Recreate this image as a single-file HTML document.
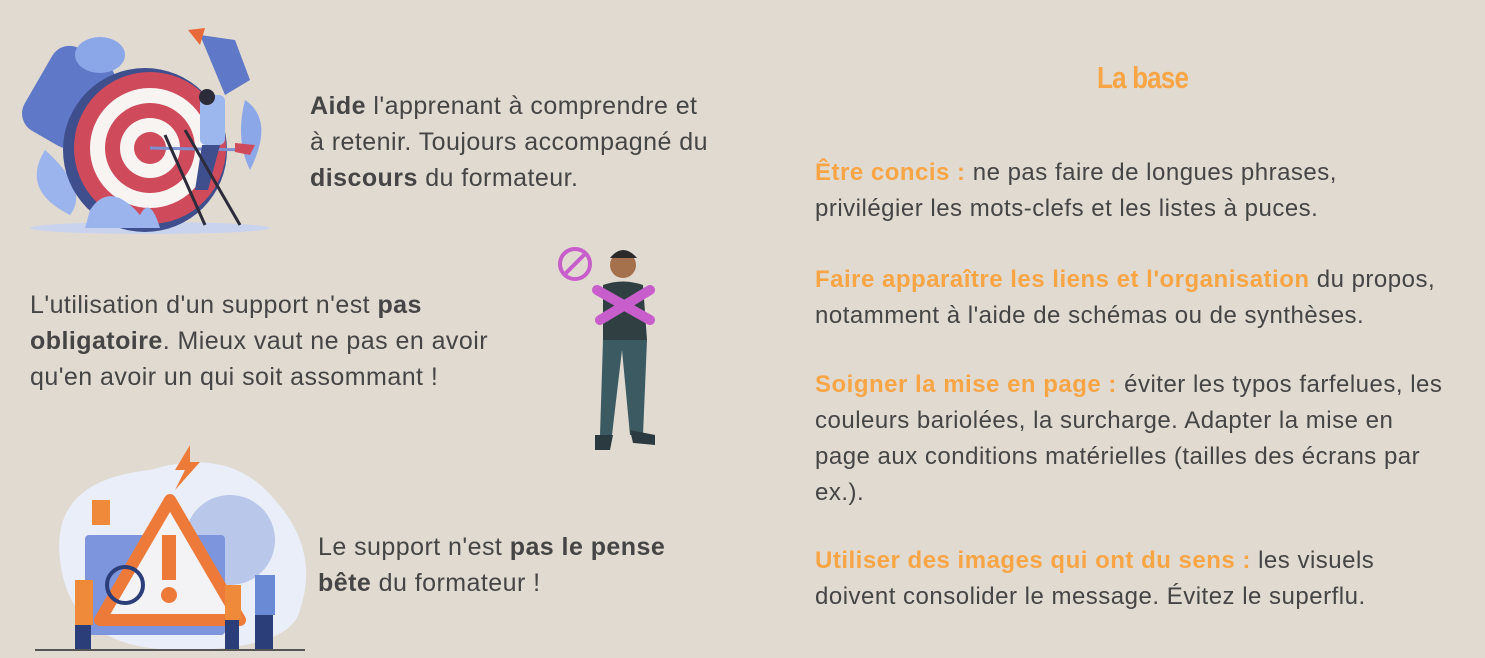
<!DOCTYPE html>
<html><head><meta charset="utf-8"><style>
body{margin:0;width:1485px;height:658px;background:#e1dad0;overflow:hidden;position:relative;font-family:"Liberation Sans",sans-serif;color:#454545}
.t{position:absolute;font-size:24px;letter-spacing:0.5px;line-height:36px;white-space:nowrap}
.l{font-size:25px;letter-spacing:0.45px}
b{font-weight:bold}
.o{color:#f7a545;font-weight:bold}
svg{position:absolute}
</style></head><body>

<svg style="left:20px;top:20px" width="260" height="220" viewBox="20 20 260 220">
<ellipse cx="150" cy="228" rx="120" ry="6" fill="#c9d3ee"/>
<rect x="35" y="50" width="70" height="95" rx="20" fill="#5f78c7" transform="rotate(30 70 95)"/>
<ellipse cx="100" cy="55" rx="25" ry="18" fill="#8ca7e8"/>
<path d="M45 150 Q20 190 70 215 Q90 190 45 150Z" fill="#9cb4ee"/>
<circle cx="145" cy="150" r="82" fill="#3f4f8e"/>
<circle cx="150" cy="148" r="76" fill="#cf4b5b"/>
<circle cx="150" cy="148" r="60" fill="#f7f4f2"/>
<circle cx="150" cy="148" r="45" fill="#cf4b5b"/>
<circle cx="150" cy="148" r="30" fill="#f7f4f2"/>
<circle cx="150" cy="148" r="16" fill="#cf4b5b"/>
<path d="M245 100 Q275 120 250 170 Q235 140 245 100Z" fill="#8ca7e8"/>
<path d="M200 35 L235 40 L250 80 L225 95 Z" fill="#5f78c7"/>
<path d="M188 30 L205 28 L200 45Z" fill="#e86a3a"/>
<line x1="150" y1="148" x2="250" y2="150" stroke="#7d8fd0" stroke-width="3"/>
<path d="M235 143 L255 145 L250 155 L235 152Z" fill="#cf4b5b"/>
<rect x="200" y="95" width="25" height="50" rx="6" fill="#9bb7ee"/>
<circle cx="207" cy="97" r="8" fill="#2b2b3a"/>
<path d="M202 145 L195 190 L208 190 L220 145Z" fill="#3f4f8e"/>
<path d="M165 135 L205 225 M185 130 L240 225" stroke="#2b2b3a" stroke-width="3"/>
<path d="M90 210 Q110 180 140 215 Q150 195 160 228 L85 228Z" fill="#9cb4ee"/>
</svg>

<div class="t l" style="left:310px;top:88px"><b>Aide</b> l'apprenant à comprendre et<br>à retenir. Toujours accompagné du<br><b>discours</b> du formateur.</div>

<div class="t l" style="left:30px;top:287px">L'utilisation d'un support n'est <b>pas</b><br><b>obligatoire</b>. Mieux vaut ne pas en avoir<br>qu'en avoir un qui soit assommant !</div>

<svg style="left:555px;top:240px" width="110" height="215" viewBox="0 0 110 215">
<circle cx="20" cy="24" r="15" fill="none" stroke="#c85ecb" stroke-width="4"/>
<line x1="10" y1="34" x2="30" y2="14" stroke="#c85ecb" stroke-width="4"/>
<circle cx="68" cy="25" r="13" fill="#a5704c"/>
<path d="M55 18 Q68 2 82 18Z" fill="#2a2a2a"/>
<path d="M48 45 Q68 38 88 45 L92 100 L48 100Z" fill="#2f3f42"/>
<path d="M42 50 L95 80 M95 50 L45 80" stroke="#c85ecb" stroke-width="10" stroke-linecap="round"/>
<path d="M48 100 L45 195 L57 195 L67 110 L75 195 L88 195 L92 100Z" fill="#3c5a62"/>
<path d="M40 195 L58 195 L55 210 L40 210Z M75 190 L100 195 L100 205 L78 203Z" fill="#2a3a40"/>
</svg>

<svg style="left:30px;top:440px" width="280" height="215" viewBox="0 0 280 215">
<path d="M30 120 Q20 40 120 30 Q200 5 245 60 Q290 110 270 170 Q260 210 150 210 Q40 210 30 120Z" fill="#e9eef8"/>
<circle cx="200" cy="100" r="45" fill="#b8c7ea"/>
<rect x="55" y="95" width="140" height="100" rx="4" fill="#7d95dd"/>
<path d="M140 60 L210 180 L70 180Z" fill="#f3f3f5" stroke="#ee7a3a" stroke-width="12" stroke-linejoin="round"/>
<rect x="132" y="95" width="14" height="45" fill="#ee7a3a"/>
<circle cx="139" cy="155" r="8" fill="#ee7a3a"/>
<path d="M160 5 L145 30 L155 30 L145 50 L170 22 L160 22Z" fill="#ee7a3a"/>
<circle cx="95" cy="145" r="18" fill="none" stroke="#2c3e7a" stroke-width="4"/>
<rect x="45" y="140" width="18" height="45" fill="#ee8a3a"/><rect x="45" y="185" width="16" height="25" fill="#2c3e7a"/>
<rect x="195" y="145" width="16" height="35" fill="#ee8a3a"/><rect x="195" y="180" width="14" height="30" fill="#2c3e7a"/>
<rect x="225" y="135" width="20" height="40" fill="#6b8ad6"/><rect x="225" y="175" width="18" height="35" fill="#2c3e7a"/>
<rect x="62" y="60" width="18" height="25" fill="#ee8a3a"/>
<line x1="5" y1="210" x2="275" y2="210" stroke="#555" stroke-width="2"/>
</svg>

<div class="t l" style="left:318px;top:529px">Le support n'est <b>pas le pense</b><br><b>bête</b> du formateur !</div>

<div style="position:absolute;left:1097px;top:60px;font-size:31px;font-weight:bold;color:#f7a545;letter-spacing:-1px;transform:scaleX(.84);transform-origin:left">La base</div>

<div class="t" style="left:815px;top:155px"><span class="o">Être concis :</span> ne pas faire de longues phrases,<br>privilégier les mots-clefs et les listes à puces.</div>
<div class="t" style="left:815px;top:262px"><span class="o">Faire apparaître les liens et l'organisation</span> du propos,<br>notamment à l'aide de schémas ou de synthèses.</div>
<div class="t" style="left:815px;top:367px"><span class="o">Soigner la mise en page :</span> éviter les typos farfelues, les<br>couleurs bariolées, la surcharge. Adapter la mise en<br>page aux conditions matérielles (tailles des écrans par<br>ex.).</div>
<div class="t" style="left:815px;top:543px"><span class="o">Utiliser des images qui ont du sens :</span> les visuels<br>doivent consolider le message. Évitez le superflu.</div>
</body></html>
